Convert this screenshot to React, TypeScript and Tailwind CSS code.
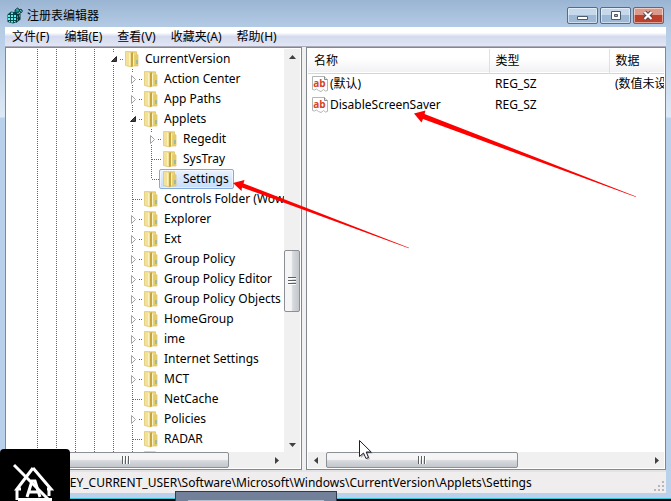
import { useState } from "react";

type Expander = "open" | "closed" | "none";

interface TreeItem {
  name: string;
  depth: number;
  expander: Expander;
  last?: boolean;
}

const MENUS = ["文件(F)", "编辑(E)", "查看(V)", "收藏夹(A)", "帮助(H)"];

const TREE: TreeItem[] = [
  { name: "CurrentVersion", depth: 4, expander: "open" },
  { name: "Action Center", depth: 5, expander: "closed" },
  { name: "App Paths", depth: 5, expander: "closed" },
  { name: "Applets", depth: 5, expander: "open" },
  { name: "Regedit", depth: 6, expander: "closed" },
  { name: "SysTray", depth: 6, expander: "none" },
  { name: "Settings", depth: 6, expander: "none", last: true },
  { name: "Controls Folder (Wow64)", depth: 5, expander: "none" },
  { name: "Explorer", depth: 5, expander: "closed" },
  { name: "Ext", depth: 5, expander: "closed" },
  { name: "Group Policy", depth: 5, expander: "closed" },
  { name: "Group Policy Editor", depth: 5, expander: "closed" },
  { name: "Group Policy Objects", depth: 5, expander: "closed" },
  { name: "HomeGroup", depth: 5, expander: "closed" },
  { name: "ime", depth: 5, expander: "closed" },
  { name: "Internet Settings", depth: 5, expander: "closed" },
  { name: "MCT", depth: 5, expander: "closed" },
  { name: "NetCache", depth: 5, expander: "none" },
  { name: "Policies", depth: 5, expander: "closed" },
  { name: "RADAR", depth: 5, expander: "none" },
  { name: "Run", depth: 5, expander: "none" },
];

const VALUES = [
  { name: "(默认)", type: "REG_SZ", data: "(数值未设置)" },
  { name: "DisableScreenSaver", type: "REG_SZ", data: "" },
];

function RegeditIcon() {
  return (
    <svg width="16" height="17" viewBox="0 0 16 17" className="shrink-0">
      <path d="M.5 7.500L4 4.500l6 1v9.500l-4 1.500-5.500-1.500z" fill="#04484c" />
      <path d="M9 7.500l4.500-1.500v6.500L9 16z" fill="#06383c" />
      <path
        d="M1 8h2v2H1zM4 8h2v2H4zM7 8h2v2H7zM1 11h2v2H1zM4 11h2v2H4zM7 11h2v2H7zM2 14h1v1H2zM4 14h2v1.500H4zM7 14h1.500v1H7zM4 5.500h2v1.500H4z"
        fill="#5ff0ee"
      />
      <path d="M10 9l1-.5v2l-1 .5zM12 8l1-.5v2l-1 .5zM10 12l1-.5v2l-1 .5z" fill="#19b3b1" />
      <path d="M8 3l2.500-2L13 3l-2 3-3-.5z" fill="#0c8b8c" stroke="#042b2f" strokeWidth=".8" />
      <path d="M12 3.500L14 2l1.500 2-1.500 2z" fill="#0c8b8c" stroke="#042b2f" strokeWidth=".8" />
      <path d="M10 2.500l1 1M13.500 3.500l.8.800" stroke="#b9ffff" />
    </svg>
  );
}

function FolderIcon() {
  return (
    <svg width="16" height="18" viewBox="0 0 16 18" className="shrink-0">
      <path d="M6 1.800h6.500v3h1.500V16H6z" fill="#edd67d" stroke="#d8bd5d" strokeWidth=".7" />
      <path d="M10.500 5H14v11h-3.500z" fill="#e5ca66" />
      <path d="M1.500 1.500h4l2 1.500v14l-6-1.500z" fill="#f3e19a" stroke="#dcc46c" strokeWidth=".7" />
      <path d="M7 3l2-1v14.500L7 17z" fill="#c8a63f" />
      <path d="M5.500 3v12.500M9.500 3.500v12" stroke="#fbf3c8" />
      <path d="M13 10v4" stroke="#5aa9dc" />
    </svg>
  );
}

function StringIcon() {
  return (
    <svg width="16" height="16" viewBox="0 0 16 16" className="shrink-0">
      <path
        d="M.5.5h12l3 3v11l-2 .5-2-1.500-2.500 2-2.500-1-2-1.500-2 1-2-.5z"
        fill="#fff"
        stroke="#b5b5b5"
      />
      <path d="M12.500.5v3h3" fill="#e5e5e5" stroke="#8d8d8d" />
      <text
        x="7.500"
        y="10.500"
        textAnchor="middle"
        fontSize="10"
        fontWeight="700"
        fontFamily="'Noto Sans', sans-serif"
        fill="#d24726"
      >
        ab
      </text>
    </svg>
  );
}

// Dotted connector running straight through a row
function Guide() {
  return (
    <svg width="19" height="20" className="shrink-0">
      <path d="M9.500 0v20" stroke="#666" strokeDasharray="1 1" />
    </svg>
  );
}

function Branch({ item }: { item: TreeItem }) {
  const isNode = item.expander !== "none";
  return (
    <svg width="19" height="20" className="shrink-0">
      <g stroke="#666" strokeDasharray="1 1" fill="none">
        <path d={isNode ? "M9.500 0v4" : "M9.500 0v10"} />
        {!item.last && <path d={isNode ? "M9.500 16v4" : "M9.500 10v10"} />}
        <path d={isNode ? "M16 10.500h3" : "M10 10.500h9"} />
      </g>
      {item.expander === "closed" && (
        <path d="M8.500 6.500v8l4-4z" fill="#fff" stroke="#a3a3a3" />
      )}
      {item.expander === "open" && (
        <path d="M12.500 7.500v5h-5z" fill="#404040" stroke="#262626" />
      )}
    </svg>
  );
}

function Arrow({ dir }: { dir: "up" | "down" | "left" | "right" }) {
  const paths = {
    up: "M1 6l3.500-4L8 6z",
    down: "M1 3l3.500 4L8 3z",
    left: "M6 1v7L2 4.500z",
    right: "M3 1v7l4-3.500z",
  };
  return (
    <svg width="9" height="9" viewBox="0 0 9 9">
      <path d={paths[dir]} fill="#404040" />
    </svg>
  );
}

function ArrowButton({ dir }: { dir: "up" | "down" | "left" | "right" }) {
  return (
    <button
      type="button"
      aria-label={`Scroll ${dir}`}
      className="flex h-4 w-4 shrink-0 items-center justify-center bg-[#f0f0f0]"
    >
      <Arrow dir={dir} />
    </button>
  );
}

function HorizontalThumb() {
  return (
    <div className="flex h-full w-full items-center justify-center gap-px rounded-xs border border-[#8c8f94] bg-linear-to-b from-[#f5f5f6] from-45% via-[#d6d9dd] via-55% to-[#c3c6ca]">
      <span className="h-2 w-0.5 border-r border-white bg-[#5c5f63]" />
      <span className="h-2 w-0.5 border-r border-white bg-[#5c5f63]" />
      <span className="h-2 w-0.5 border-r border-white bg-[#5c5f63]" />
    </div>
  );
}

function TitleBar() {
  const button =
    "flex h-[17px] w-[31px] items-center justify-center rounded-xs border border-[#566b85] shadow-[inset_0_0_0_1px_rgba(255,255,255,0.5)]";
  return (
    <header className="flex h-[27px] shrink-0 items-center justify-between pt-1 pr-0.5 pl-0.5">
      <h1 className="flex items-center gap-1 text-[12px]">
        <RegeditIcon />
        注册表编辑器
      </h1>
      <div className="flex gap-0.5">
        <button
          type="button"
          aria-label="Minimize"
          className={`${button} bg-linear-to-b from-[#c5d8ec] from-50% to-[#9db9d6] to-50%`}
        >
          <svg width="12" height="11">
            <path d="M.5 6.500h10v3H.5z" fill="#fff" stroke="#4c5a6b" />
          </svg>
        </button>
        <button
          type="button"
          aria-label="Maximize"
          className={`${button} bg-linear-to-b from-[#c5d8ec] from-50% to-[#9db9d6] to-50%`}
        >
          <svg width="12" height="11">
            <path
              d="M1.500 1.500h9v8h-9zM4.500 4.500v2h3v-2z"
              fill="#fff"
              fillRule="evenodd"
              stroke="#4c5a6b"
            />
          </svg>
        </button>
        <button
          type="button"
          aria-label="Close"
          className={`${button} bg-linear-to-b from-[#dd9a8b] from-50% to-[#bc412c] to-50%`}
        >
          <svg width="13" height="11">
            <path d="M2.500 2l7 7M9.500 2l-7 7" stroke="#5a4048" strokeWidth="4" />
            <path d="M2.500 2l7 7M9.500 2l-7 7" stroke="#fff" strokeWidth="2.200" />
          </svg>
        </button>
      </div>
    </header>
  );
}

function KeyTree() {
  const [selected, setSelected] = useState("Settings");

  return (
    <section className="flex w-[297px] shrink-0 flex-col border border-[#828790] bg-white p-px">
      <div className="flex min-h-0 flex-1">
        <ul className="min-w-0 flex-1 overflow-hidden pl-[21px]">
          {TREE.map((item) => (
            <li key={item.name} className="flex h-5 items-center whitespace-nowrap">
              {Array.from({ length: item.depth }, (_, i) => (
                <Guide key={i} />
              ))}
              <Branch item={item} />
              <button
                type="button"
                onClick={() => setSelected(item.name)}
                className={
                  selected === item.name
                    ? "-ml-0.5 flex h-5 items-center gap-[5px] rounded-xs border border-[#84acdd] bg-linear-to-b from-[#e9f2fd] to-[#c5ddfb] pr-1 pl-0.5 shadow-[inset_0_0_0_1px_rgba(255,255,255,0.5)]"
                    : "ml-px flex h-5 items-center gap-[5px]"
                }
              >
                <FolderIcon />
                {item.name}
              </button>
            </li>
          ))}
        </ul>
        <div className="flex w-4 flex-col bg-[#f0f0f0]">
          <ArrowButton dir="up" />
          <div className="flex-[186]" />
          <div className="flex h-[62px] flex-col items-center justify-center gap-px rounded-xs border border-[#8c8f94] bg-linear-to-r from-[#f5f5f6] from-45% via-[#d6d9dd] via-55% to-[#c3c6ca]">
            <span className="h-0.5 w-2 border-b border-white bg-[#5c5f63]" />
            <span className="h-0.5 w-2 border-b border-white bg-[#5c5f63]" />
            <span className="h-0.5 w-2 border-b border-white bg-[#5c5f63]" />
          </div>
          <div className="flex-[124]" />
          <ArrowButton dir="down" />
        </div>
      </div>
      <div className="flex h-4 shrink-0 bg-[#f0f0f0] pr-4">
        <ArrowButton dir="left" />
        <div className="h-full flex-[206]">
          <HorizontalThumb />
        </div>
        <div className="flex-[39]" />
        <ArrowButton dir="right" />
      </div>
    </section>
  );
}

function ValueList() {
  return (
    <section className="flex min-w-0 flex-1 flex-col border border-[#828790] bg-white p-px">
      <div className="min-h-0 flex-1 overflow-hidden">
        <table className="w-full table-fixed border-collapse text-left whitespace-nowrap">
          <colgroup>
            <col className="w-[181px]" />
            <col className="w-[120px]" />
            <col />
          </colgroup>
          <thead>
            <tr className="h-6 border-b border-[#d5d5d5] bg-linear-to-b from-white from-40% to-[#f1f2f4]">
              <th className="border-r border-[#dfe0e3] px-1.5 font-normal">名称</th>
              <th className="border-r border-[#dfe0e3] px-1.5 font-normal">类型</th>
              <th className="px-1.5 font-normal">数据</th>
            </tr>
          </thead>
          <tbody>
            {VALUES.map((value) => (
              <tr key={value.name} className="h-[21px]">
                <td className="px-1">
                  <span className="flex items-center gap-0.5">
                    <StringIcon />
                    {value.name}
                  </span>
                </td>
                <td className="px-1.5">{value.type}</td>
                <td className="overflow-hidden pl-1.5">{value.data}</td>
              </tr>
            ))}
          </tbody>
        </table>
      </div>
      <div className="flex h-4 shrink-0 bg-[#f0f0f0]">
        <ArrowButton dir="left" />
        <div className="h-full flex-[193] pl-0.5">
          <HorizontalThumb />
        </div>
        <div className="flex-[130]" />
        <ArrowButton dir="right" />
      </div>
    </section>
  );
}

function StatusBar() {
  return (
    <footer className="flex h-[21px] shrink-0 items-center justify-between bg-[#f0edee] pl-2">
      <span>
        计算机\HKEY_CURRENT_USER\Software\Microsoft\Windows\CurrentVersion\Applets\Settings
      </span>
      <svg width="12" height="12" className="self-end">
        <path
          d="M8 0h2v2H8zM4 4h2v2H4zM8 4h2v2H8zM0 8h2v2H0zM4 8h2v2H4zM8 8h2v2H8z"
          fill="#b9b6b9"
        />
      </svg>
    </footer>
  );
}

// Red pointers, mouse cursor and corner items drawn over the window
function Overlays() {
  return (
    <div className="pointer-events-none absolute inset-0 overflow-hidden">
      <svg width="671" height="501" className="absolute top-0 left-0">
        <g fill="#fe0000">
          <path d="M233 183l11.500-3-1 3.500 165.500 64.300-.2.400-166.800-60.700-.5 3.500z" />
          <path d="M414 113.500l11.500-3-1 3.500 211.500 82.500-.2.500-212.800-78-1.500 3.500z" />
        </g>
        <path
          d="M361 442v16l4-3.500 2.500 5.500 2.500-1-2.300-5.500h5z"
          fill="#000"
          opacity=".25"
        />
        <path
          d="M359.500 440.500v16l4-3.500 2.500 5.500 2.500-1-2.300-5.500h5z"
          fill="#fff"
          stroke="#1d1d2b"
        />
      </svg>
      <div className="absolute bottom-0 left-[175px] h-2.5 w-[162px] border border-b-0 border-[#2f3a4d] bg-[#728199] px-3 pt-2">
        <div className="h-px bg-[#b4c0d0]" />
      </div>
      <div className="absolute bottom-0 left-0 h-[52px] w-[70px] rounded-t-sm bg-black">
        <svg width="70" height="52" viewBox="0 0 70 52" fill="none" stroke="#fff">
          <path d="M14 16l37 37" strokeWidth="3" />
          <path d="M33 19L17 40h4M33 19l18 21h-4" strokeWidth="3" />
          <path d="M17 41v10M49 41v6" strokeWidth="3" />
          <path d="M27 48l5-16h3l5 16M29 43h9" strokeWidth="3" />
          <path d="M18 50.500h34" strokeWidth="3" />
        </svg>
      </div>
    </div>
  );
}

export default function App() {
  return (
    <div className="relative flex h-screen flex-col bg-black font-['Noto_Sans','Noto_Sans_CJK_SC',sans-serif] text-[12px] leading-4 text-black">
      <main className="flex min-h-0 flex-1 flex-col border-b border-[#35c6dd] bg-[linear-gradient(#9ab5d3_0px,#b4cbe5_28px,#dde9f6_117px,#b9d1ea_118px)] px-[5px] pb-[5px]">
        <TitleBar />
        <nav className="flex h-5 shrink-0 items-center gap-[15px] border-b border-[#a9acb8] bg-linear-to-b from-white from-30% via-[#d5dbee] via-50% to-[#e1e5f4] pl-[7px]">
          {MENUS.map((menu) => (
            <button key={menu} type="button">
              {menu}
            </button>
          ))}
        </nav>
        <div className="flex min-h-0 flex-1 gap-1 bg-[#f0f0f0]">
          <KeyTree />
          <ValueList />
        </div>
        <div className="h-0.5 shrink-0 bg-[#e3e3e5]" />
        <StatusBar />
      </main>
      <div className="h-0.5 shrink-0" />
      <Overlays />
    </div>
  );
}
